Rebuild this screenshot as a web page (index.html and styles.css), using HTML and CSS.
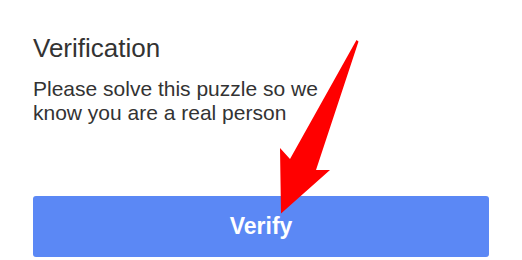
FILE: index.html
```html
<!DOCTYPE html>
<html>
<head>
<meta charset="utf-8">
<link rel="stylesheet" href="styles.css">
</head>
<body>
<div class="card">
  <h1 class="title">Verification</h1>
  <p class="desc">Please solve this puzzle so we<br>know you are a real person</p>
  <button class="verify">Verify</button>
</div>
<svg class="arrow" width="522" height="260" viewBox="0 0 522 260">
  <polygon points="356.5,40 358.5,41.5 316,170 330,170 281,213.5 280,148 290,159" fill="#ff0000"/>
</svg>
</body>
</html>
```
FILE: styles.css
```css
html, body {
  margin: 0;
  padding: 0;
  background: #ffffff;
}
body {
  position: relative;
  width: 522px;
  height: 260px;
  overflow: hidden;
  font-family: "Liberation Sans", Arial, sans-serif;
}
.card {
  padding: 33px 33px 0 33px;
  display: flex;
  flex-direction: column;
}
.title {
  margin: 0;
  font-size: 26px;
  line-height: 30px;
  font-weight: normal;
  color: #333333;
}
.desc {
  margin: 14px 0 0 0;
  font-size: 21px;
  line-height: 24px;
  color: #333333;
}
.verify {
  margin-top: 71px;
  width: 456px;
  height: 61px;
  border: none;
  border-radius: 3px;
  background: #5b88f5;
  color: #ffffff;
  font-family: "Liberation Sans", Arial, sans-serif;
  font-weight: bold;
  font-size: 23px;
  line-height: 61px;
  padding: 0;
  text-align: center;
}
.arrow {
  position: absolute;
  left: 0;
  top: 0;
  pointer-events: none;
}
```
